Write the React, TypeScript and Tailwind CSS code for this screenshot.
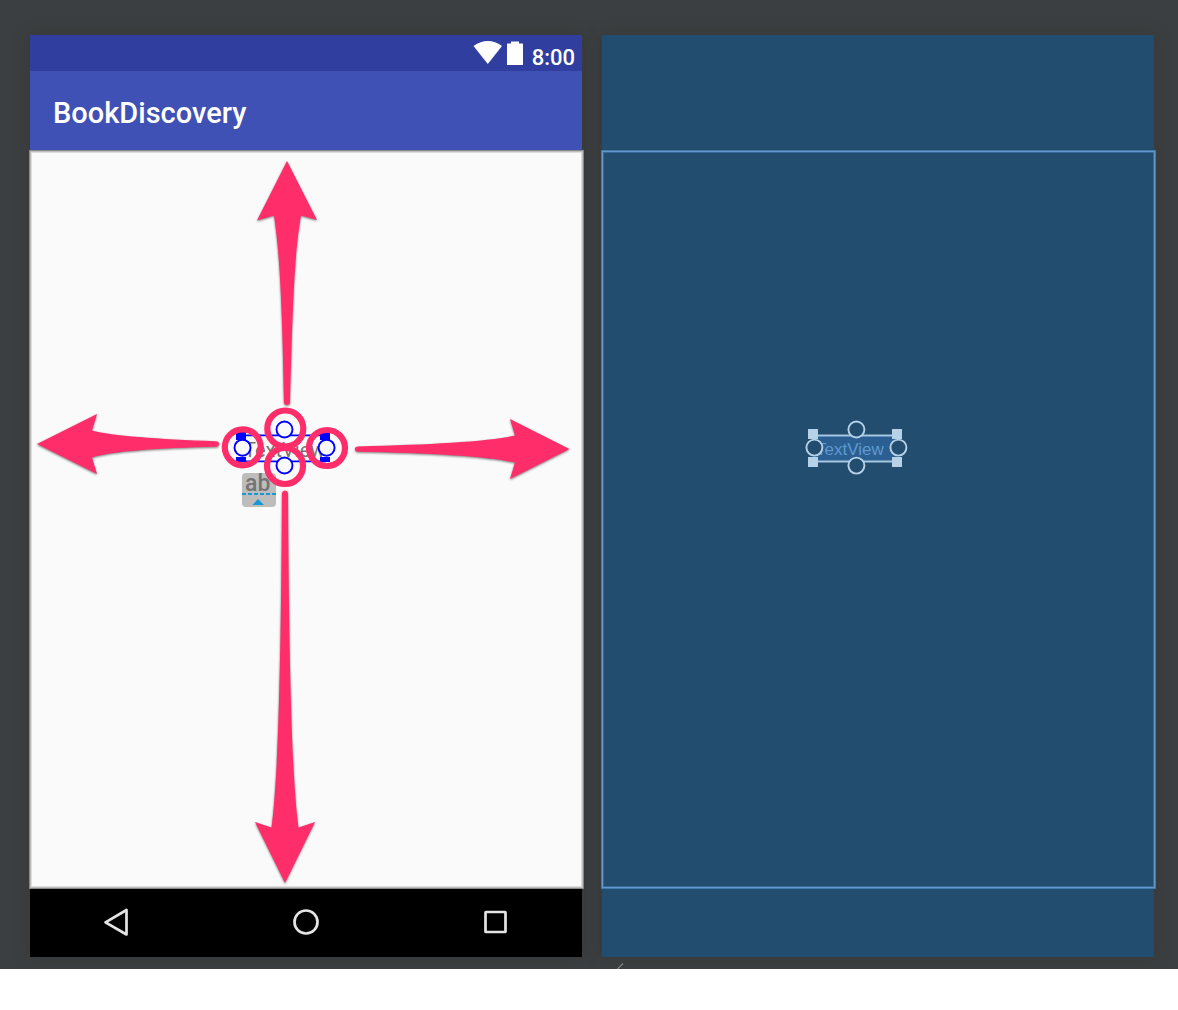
import type { ReactNode } from "react";

const PINK = "#ff2d69";

function StatusBar() {
  return (
    <div className="flex h-9 items-center justify-end bg-[#303f9f] pr-[7px] text-white">
      <svg width="30" height="24" viewBox="0 0 30 24" className="mr-1" fill="currentColor" aria-label="Wi-Fi">
        <path d="M0.5 5 Q15 -4.800 29 5 L14.800 23Z" />
      </svg>
      <svg width="17" height="24" viewBox="0 0 17 24" className="mr-2" fill="currentColor" aria-label="Battery">
        <path d="M4 0.500h8v2h3.500a0.500 0.500 0 0 1 0.500 0.500v20.500a0.500 0.500 0 0 1-0.500 0.500h-15a0.500 0.500 0 0 1-0.500-0.500V3a0.500 0.500 0 0 1 0.500-0.500H4z" />
      </svg>
      <span className="pt-2.5 text-[22px] leading-6 font-medium">8:00</span>
    </div>
  );
}

function NavBar() {
  return (
    <nav className="flex h-[69px] items-center justify-between bg-black px-[73px] pb-px text-[#e4e4e4]">
      <button type="button" aria-label="Back">
        <svg width="26" height="28" viewBox="0 0 26 28" fill="none" stroke="currentColor" strokeWidth="2.7" strokeLinejoin="round">
          <path d="M23.500 2v24.500L2.500 14.300z" />
        </svg>
      </button>
      <button type="button" aria-label="Home">
        <svg width="26" height="26" viewBox="0 0 26 26" fill="none" stroke="currentColor" strokeWidth="2.7">
          <circle cx="13" cy="13" r="11.5" />
        </svg>
      </button>
      <button type="button" aria-label="Overview">
        <svg width="26" height="26" viewBox="0 0 26 26" fill="none" stroke="currentColor" strokeWidth="2.7" strokeLinejoin="round">
          <rect x="2.500" y="3" width="20" height="20" rx="0.5" />
        </svg>
      </button>
    </nav>
  );
}

function Annotations() {
  return (
    <svg width="552" height="737" viewBox="30 151 552 737" className="relative block" aria-hidden="true">
      <g stroke="#0000ff" strokeWidth="1.7">
        <path d="M241 435.4h85M241 461.3h85" />
      </g>
      <g fill="#0000ff">
        <path d="M236 432h10v8h-10zM320 432h10v8h-10zM236 457h10v5h-10zM320 457h10v5h-10z" />
      </g>
      <g fill="#fafafa" stroke="#0000ff" strokeWidth="1.9">
        <circle cx="242.5" cy="447.7" r="8" />
        <circle cx="326.6" cy="447.7" r="8" />
        <circle cx="284.5" cy="429.5" r="8" />
        <circle cx="284.5" cy="465.5" r="8" />
      </g>
      <g fill="none" stroke={PINK} strokeWidth="6.2">
        <circle cx="285.3" cy="428.5" r="18" />
        <circle cx="285" cy="466" r="18" />
        <circle cx="242.8" cy="447.3" r="18" />
        <circle cx="327" cy="448" r="18" />
      </g>
      <g fill={PINK} className="drop-shadow-[0_1px_1px_rgba(0,0,0,0.5)]">
        <path d="M287 161 L317 220 L301 215.500 C295 250 293 290 290 403 Q289.500 405 287 405 Q284.500 405 284 403 C282 290 279 250 274 215.500 L257 220.500Z" />
        <path d="M285 883 L255 822 L271.500 827.500 C278 780 281 670 282 493 Q282.500 490.500 285 490.500 Q287.500 490.500 288 493 C289 670 292 780 298.500 827.500 L315 822Z" />
        <path d="M37 444 L97 414 L92 430.500 C112 436 158 439 216 441.300 Q219 441.500 219 444 Q219 446.500 216 446.700 C158 448 112 451 92 457.500 L97 474Z" />
        <path d="M569.500 449 L510 419 L515 435.500 C485 442 430 444.500 358 446.400 Q355 446.500 355 449 Q355 451.500 358 451.700 C430 453 485 456 515 462.500 L510 479Z" />
      </g>
    </svg>
  );
}

function AutosizeBadge() {
  return (
    <div className="absolute top-[322px] left-[212px] h-[34px] w-[34px] rounded bg-[#bdbdbd]">
      <span className="block h-5 pl-[3px] text-[23px] leading-[22px] font-medium text-[#747474]">ab</span>
      <svg width="34" height="14" viewBox="0 0 34 14" aria-hidden="true">
        <path d="M0 1h34" stroke="#1c97d5" strokeWidth="2" strokeDasharray="4 2" />
        <path d="M10.500 12l5.500-6 6 6z" fill="#1c97d5" />
      </svg>
    </div>
  );
}

function BlueprintHandles() {
  return (
    <svg width="552" height="737" viewBox="602 151 552 737" className="relative block" aria-hidden="true">
      <path d="M813 435.500h84M813 461.500h84" stroke="#a6c7e1" strokeWidth="2" />
      <path d="M808 429h10v10h-10zM892 429h10v10h-10zM808 457h10v10h-10zM892 457h10v10h-10z" fill="#b5d2e8" />
      <g fill="#224d6e" stroke="#b5d2e8" strokeWidth="1.9">
        <circle cx="814.4" cy="447.6" r="8" />
        <circle cx="898.4" cy="447.6" r="8" />
        <circle cx="856.4" cy="429.5" r="8" />
        <circle cx="856.4" cy="465.6" r="8" />
      </g>
    </svg>
  );
}

function Canvas({ frame, children }: { frame: string; children: ReactNode }) {
  return (
    <div className="relative flex justify-center">
      <div className={"pointer-events-none absolute -top-px -right-0.5 -bottom-px -left-px " + frame} />
      <div className="relative">{children}</div>
    </div>
  );
}

export default function App() {
  return (
    <div className="min-h-screen bg-white font-['Roboto',sans-serif]">
      <main className="relative flex gap-5 overflow-hidden bg-[#3c3f41] pt-[35px] pr-6 pb-3 pl-[30px]">
        <section aria-label="Design view" className="min-w-0 flex-1 bg-[#fafafa] shadow-[0_0_12px_rgba(50,50,50,0.6)]">
          <StatusBar />
          <header className="flex h-20 items-center bg-[#3f51b5] px-[23px] pt-1">
            <h1 className="text-[29px] leading-9 font-medium text-white">BookDiscovery</h1>
          </header>
          <Canvas frame="border border-[#888888] shadow-[inset_0_0_0_1px_#bdbdbd,inset_0_0_0_2px_#dddddd]">
            <span className="absolute top-[287px] left-[214px] text-xl leading-6 text-[#747474]">TextView</span>
            <AutosizeBadge />
            <Annotations />
          </Canvas>
          <NavBar />
        </section>

        <section aria-label="Blueprint view" className="min-w-0 flex-1 bg-[#224d6e] pt-[116px] pb-[69px] shadow-[0_0_12px_rgba(50,50,50,0.6)]">
          <Canvas frame="border border-[#447aa8] shadow-[inset_0_0_0_1px_#6298ca,inset_0_0_0_2px_#356a98]">
            <div className="absolute top-[284px] left-[211px] h-[26px] w-[84px] bg-[#2b5f91] pl-[3px] font-['Liberation_Sans',sans-serif] text-[17px] leading-[30px] text-[#5f99cf]">
              TextView
            </div>
            <BlueprintHandles />
          </Canvas>
        </section>

        <svg width="6" height="6" viewBox="0 0 6 6" className="absolute bottom-0 left-[617px]" aria-hidden="true">
          <path d="M0.500 6L6 0.500" stroke="#858585" strokeWidth="1.2" />
        </svg>
      </main>
    </div>
  );
}
